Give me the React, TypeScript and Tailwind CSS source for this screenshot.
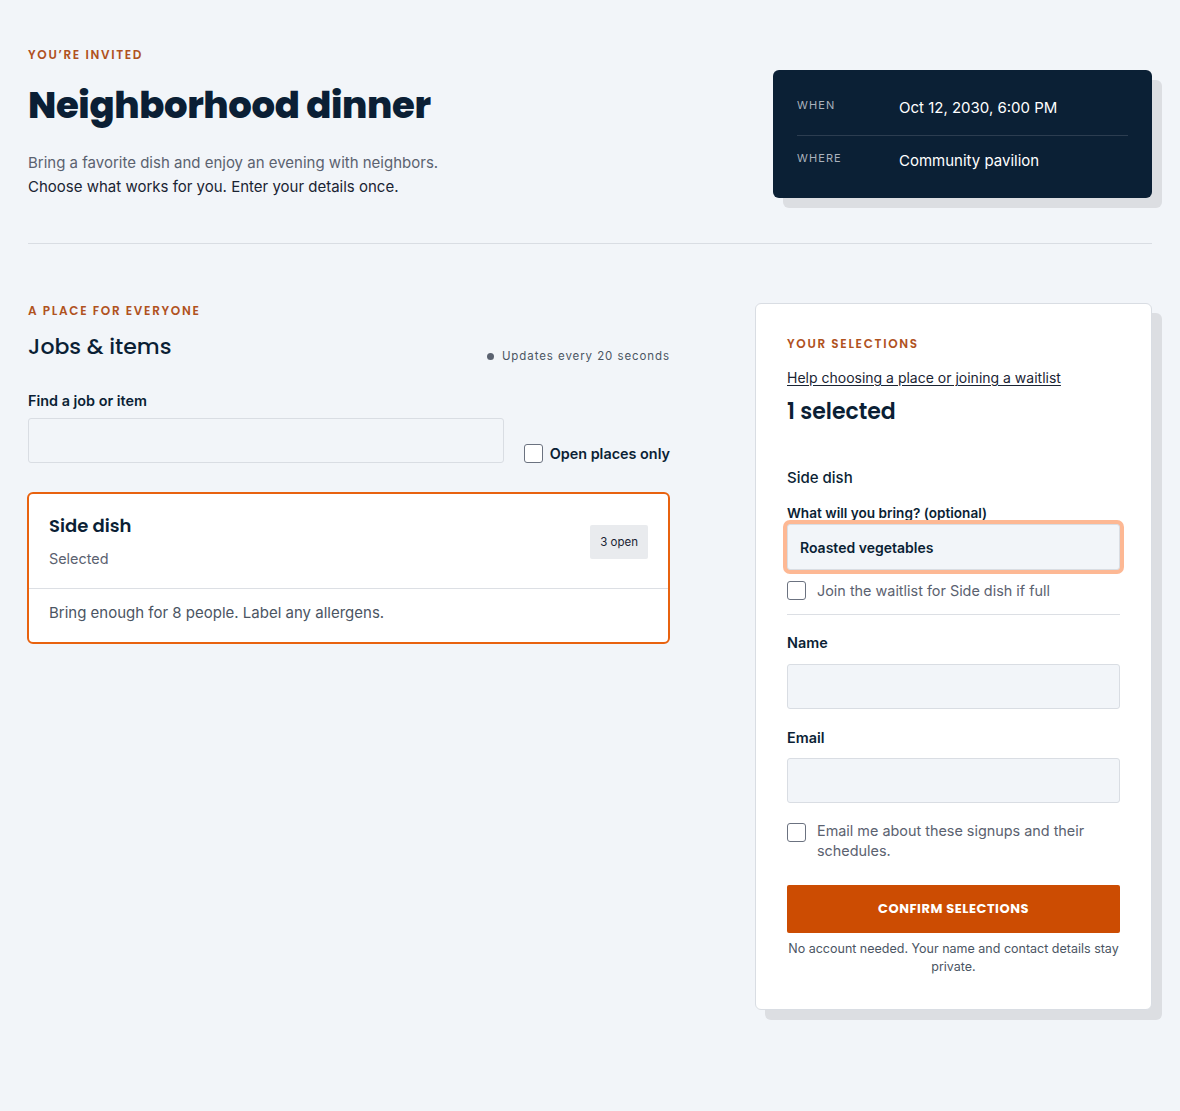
import { useState } from "react";

const heading = "font-['Poppins','Inter','Noto_Sans',sans-serif]";
const eyebrow = `${heading} text-[12px] leading-4 font-semibold tracking-[0.14em] text-[#b0521e]`;
const field = "block h-[45px] w-full rounded-[3px] border border-[#d9dde3] bg-[#f2f5f9] px-3 text-[14px] outline-none";

function Checkbox({ checked, onChange }: { checked: boolean; onChange: () => void }) {
  return (
    <button
      type="button"
      onClick={onChange}
      className="flex h-[19px] w-[19px] shrink-0 items-center justify-center rounded-[3px] border border-[#6b7280] bg-white"
    >
      {checked && (
        <svg width="12" height="12" viewBox="0 0 24 24" fill="none" stroke="#0b1f35" strokeWidth="3">
          <path d="M5 12l5 5 9-10" />
        </svg>
      )}
    </button>
  );
}

export default function App() {
  const [openOnly, setOpenOnly] = useState(false);
  const [waitlist, setWaitlist] = useState(false);
  const [emailMe, setEmailMe] = useState(false);
  const [bring, setBring] = useState("Roasted vegetables");

  return (
    <div className="min-h-[1111px] bg-[#f2f5f9] px-7 pt-[47px] pb-20 font-['Inter',sans-serif] text-[#0b1f35]">
      {/* --- HEADER --- */}
      <header className="flex items-start justify-between">
        <div>
          <p className={eyebrow}>YOU’RE INVITED</p>
          <h1 className={`${heading} mt-[19px] text-[37px] font-extrabold leading-[46px] tracking-[-0.01em] text-[#0b1f35]`}>
            Neighborhood dinner
          </h1>
          <p className="mt-[23px] text-[15px] leading-6 text-[#5b6270]">Bring a favorite dish and enjoy an evening with neighbors.</p>
          <p className="text-[15px] leading-6 text-[#1a2433]">Choose what works for you. Enter your details once.</p>
        </div>

        <div className="mt-[23px] w-[379px] rounded-md bg-[#0b2035] px-6 pt-[27px] pb-[26px] shadow-[10px_10px_0_#dcdee2]">
          <div className="flex items-start pb-4">
            <span className="w-[102px] text-[11px] leading-4 tracking-[0.1em] text-[#aab2bd]">WHEN</span>
            <span className="text-[15px] leading-[22px] text-white">Oct 12, 2030, 6:00 PM</span>
          </div>
          <div className="flex items-start border-t border-[#2c3d50] pt-[14px]">
            <span className="w-[102px] text-[11px] leading-4 tracking-[0.1em] text-[#aab2bd]">WHERE</span>
            <span className="text-[15px] leading-[22px] text-white">Community pavilion</span>
          </div>
        </div>
      </header>

      <hr className="mt-[44px] border-[#d9dde3]" />

      {/* --- MAIN --- */}
      <div className="mt-[59px] flex items-start justify-between">
        <section className="w-[642px] shrink-0">
          <p className={eyebrow}>A PLACE FOR EVERYONE</p>
          <div className="mt-[12px] flex items-start justify-between">
            <h2 className={`${heading} text-[22px] font-medium leading-8 text-[#0b1f35]`}>Jobs &amp; items</h2>
            <span className="mt-[17px] flex items-center gap-[8px] text-[11.5px] leading-4 tracking-[0.08em] text-[#4b5563]">
              <span className="h-[7px] w-[7px] rounded-full bg-[#5b6270]" />
              Updates every 20 seconds
            </span>
          </div>

          <div className="mt-[27px] flex items-end justify-between">
            <label className="flex w-[476px] flex-col">
              <span className="text-[14.4px] font-semibold leading-5 text-[#0b1f35]">Find a job or item</span>
              <input className={`${field} mt-[7px]`} />
            </label>
            <div className="flex items-center gap-[7px]">
              <Checkbox checked={openOnly} onChange={() => setOpenOnly(!openOnly)} />
              <span className="text-[14.4px] font-semibold leading-[19px] text-[#0b1f35]">Open places only</span>
            </div>
          </div>

          <div className="mt-[29px] ml-[-1px] overflow-hidden rounded-md border-2 border-[#e8620f] bg-white">
            <div className="flex items-start justify-between border-b border-[#dcdfe4] px-5 pt-[20px] pb-[19px]">
              <div>
                <h3 className={`${heading} text-[18px] font-semibold leading-6 text-[#0b1f35]`}>Side dish</h3>
                <p className="mt-[11px] text-[14.4px] leading-5 text-[#5b6270]">Selected</p>
              </div>
              <span className="mt-[11px] rounded-[2px] bg-[#e9ebee] px-[10px] py-[8px] text-[11.5px] leading-[18px] text-[#1a2433]">3 open</span>
            </div>
            <p className="px-5 pt-[12px] pb-[17px] text-[15px] leading-6 text-[#4b5563]">Bring enough for 8 people. Label any allergens.</p>
          </div>
        </section>

        {/* --- SELECTIONS PANEL --- */}
        <aside className="w-[397px] shrink-0 rounded-md border border-[#d9dde3] bg-white px-[31px] pt-[32px] pb-[33px] shadow-[10px_10px_0_#dcdee2]">
          <p className={eyebrow}>YOUR SELECTIONS</p>
          <a href="#" className="mt-[16px] block text-[14px] leading-5 text-[#1a2433] underline underline-offset-2">
            Help choosing a place or joining a waitlist
          </a>
          <p className={`${heading} mt-[8px] text-[22px] font-semibold leading-8 text-[#0b1f35]`}>1 selected</p>

          <p className="mt-[38px] text-[15px] font-medium leading-6 text-[#0b1f35]">Side dish</p>
          <label className="mt-[15px] flex flex-col">
            <span className="h-4 text-[13.6px] font-semibold leading-4 text-[#0b1f35]">What will you bring? (optional)</span>
            <input
              value={bring}
              onChange={(e) => setBring(e.target.value)}
              className={`${field} relative mt-[3px] h-[46px] text-[13px] font-semibold text-[#0b1f35] ring-4 ring-[#fdb894]`}
            />
          </label>
          <div className="mt-[11px] flex items-center gap-[11px]">
            <Checkbox checked={waitlist} onChange={() => setWaitlist(!waitlist)} />
            <span className="text-[14.4px] leading-[19px] text-[#5b6270]">Join the waitlist for Side dish if full</span>
          </div>

          <hr className="mt-[14px] border-[#dcdfe4]" />

          <label className="mt-[18px] flex flex-col">
            <span className="text-[14.4px] font-semibold leading-5 text-[#0b1f35]">Name</span>
            <input className={`${field} mt-[11px]`} />
          </label>
          <label className="mt-[19px] flex flex-col">
            <span className="text-[14.4px] font-semibold leading-5 text-[#0b1f35]">Email</span>
            <input className={`${field} mt-[10px]`} />
          </label>

          <div className="mt-[20px] flex items-start gap-[11px]">
            <Checkbox checked={emailMe} onChange={() => setEmailMe(!emailMe)} />
            <span className="mt-[-2px] text-[14.4px] leading-5 text-[#5b6270]">Email me about these signups and their schedules.</span>
          </div>

          <button className={`${heading} mt-[24px] block h-[48px] w-full rounded-[2px] bg-[#cc4c02] text-[13px] font-bold tracking-[0.04em] text-white`}>
            CONFIRM SELECTIONS
          </button>
          <p className="mt-[7px] text-center text-[12.5px] leading-[18px] text-[#4b5563]">
            No account needed. Your name and contact details stay private.
          </p>
        </aside>
      </div>
    </div>
  );
}
